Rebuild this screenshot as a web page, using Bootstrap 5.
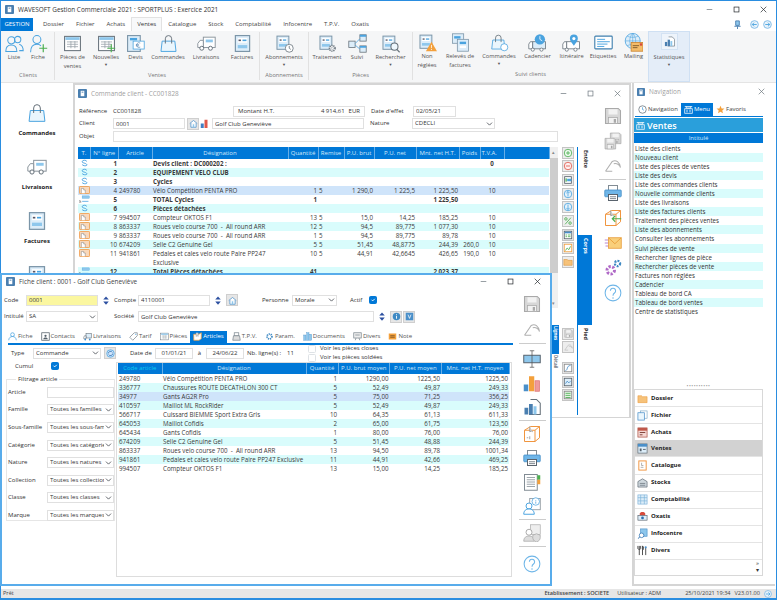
<!DOCTYPE html>
<html lang="fr">
<head>
  <meta charset="UTF-8" />
  <title>WAVESOFT Gestion Commerciale 2021</title>
  <link href="https://cdn.jsdelivr.net/npm/bootstrap@5.3.0/dist/css/bootstrap.min.css" rel="stylesheet"/>
  <style>
    body { margin: 0; width: 777px; height: 600px; overflow: hidden; background: #fff; font-family: "Open Sans", "Noto Sans", sans-serif; font-size: 6px; line-height: 9px; color: #333; }
    .app { width: 777px; height: 600px; border: 1px solid #2a8de0; border-bottom-width: 2px; }
    svg { display: block; flex: none; }
    .i7 { width: 7px; height: 7px; } .i8 { width: 8px; height: 8px; } .i9 { width: 9px; height: 9px; } .i10 { width: 10px; height: 10px; }
    .i11 { width: 11px; height: 11px; } .i18 { width: 18px; height: 18px; } .i19 { width: 19px; height: 19px; } .i20 { width: 20px; height: 20px; }
    .g { width: 11px; height: 8px; } .spin { width: 8px; height: 11px; }
    .w13 { width: 13px; } .w19 { width: 19px; } .w21 { width: 21px; } .w22 { width: 22px; } .w24 { width: 24px; } .w25 { width: 25px; } .w27 { width: 27px; } .w28 { width: 28px; }
    .w29 { width: 29px; } .w30 { width: 30px; } .w31 { width: 31px; } .w32 { width: 32px; } .w34 { width: 34px; } .w35 { width: 35px; } .w36 { width: 36px; } .w37 { width: 37px; } .w38 { width: 38px; }
    .w39 { width: 39px; } .w40 { width: 40px; } .w42 { width: 42px; } .w43 { width: 43px; } .w45 { width: 45px; } .w48 { width: 48px; } .w65 { width: 65px; } .w67 { width: 67px; } .w68 { width: 68px; }
    .w72 { width: 72px; } .w83 { width: 83px; } .w120 { width: 120px; } .w132 { width: 132px; } .w152 { width: 152px; } .w236 { width: 236px; } .w445 { width: 445px; }
    .ml1 { margin-left: 1px; } .ml2 { margin-left: 2px; } .ml3 { margin-left: 3px; } .ml6 { margin-left: 6px; } .ml13 { margin-left: 13px; } .ml14 { margin-left: 14px; } .ml27 { margin-left: 24px; }
    .mr1 { margin-right: 1px; } .mr3 { margin-right: 3px; } .mr20 { margin-right: 20px; } .mt2p { margin-top: 2px; }

    /* title bar + menu */
    .titlebar { height: 17px; font-size: 6.4px; padding-right: 9px; }
    .menubar { height: 13px; }
    .menubar .gestion { width: 32px; height: 13px; padding: 0; border: 0; border-radius: 0; background: #0078d7; color: #fff; font-size: 6px; line-height: 13px; margin-right: 4px; }
    .menubar .nav-link { padding: 0 6px; line-height: 13px; font-size: 6px; color: #444; }
    .menubar .nav-link.active { background: #f8f9fa; border: 1px solid #e2e2e2; border-bottom: 0; color: #333; line-height: 13px; margin-top: -1px; padding: 0 5px; }
    .ribbon { height: 52px; background: #f5f6f7; padding-left: 1px; border-bottom: 1px solid #e4e4e4; }
    .rgroup { border-right: 1px solid #e1e1e1; margin: 1px 0 2px; }
    .rbtn { height: 39px; padding-top: 2px; line-height: 8.5px; text-align: center; font-size: 5.7px; color: #555; }
    .rbtn svg { margin: 0 auto; }
    .rcaption { height: 9px; text-align: center; color: #777; font-size: 5.7px; }
    .caret { font-size: 4px; line-height: 6px; display: block; }
    .stats { background: #e4edf8; border: 1px solid #cfe0f3; margin-top: 0; height: 51px; padding-top: 1px; }
    .stats .box { width: 17px; height: 17px; background: #eef4fb; border: 1px solid #d3e2f3; margin: 0 auto 3px; padding: 2px; }

    /* workspace */
    .workspace { height: 506px; }
    .sidebar { width: 72px; padding-top: 20px; }
    .sidebar .item { height: 54px; font-weight: 700; color: #222; font-size: 6px; text-align: center; }
    .sidebar svg { margin: 0 auto 6px; }
    .win-back { width: 558px; height: 335px; border: 1px solid #d5d5d5; border-width: 2px 2px 1px 2px; }
    .wintitle { height: 16px; color: #a0a0a0; font-size: 6.4px; padding: 1px 8px 0 3px; }
    .fc { height: 11px; min-height: 0; padding: 0 2px; font-size: inherit; line-height: 9px; border-radius: 0; border-color: #e0e0e0; color: #333; }
    .code { background: #fbf7a0; }
    .fs { height: 11px; min-height: 0; padding: 0 9px 0 2px; font-size: inherit; line-height: 9px; border-radius: 0; border-color: #e0e0e0; background-size: 7px 6px; background-position: right 1px center; color: #333; }
    .ck { width: 8px; height: 8px; margin: 0; border-radius: 0; flex: none; }
    .form-check-input.ck:checked { background-color: #0078d7; border-color: #0078d7; }
    .frow { height: 12.5px; }
    .iconbtn { width: 12px; height: 12px; background: #e6e6e6; border: 1px solid #cfcfcf; padding: 0; border-radius: 0; }
    .backleft { width: 502px; padding-left: 3px; }

    /* grids */
    .grid { table-layout: fixed; margin: 0; width: 471px; font-size: 6.2px; --bs-table-bg: transparent; }
    .grid > :not(caption) > * > * { padding: 0 1px; height: 9.1px; line-height: 9px; border: 0; color: #3a3a3a; background: #fff; overflow: hidden; white-space: nowrap; box-shadow: none; }
    .grid > thead > tr > th { height: 11px; background: #0078d7; color: #d5e9fa; font-weight: 400; text-align: center; border-right: 1px solid #67aee8; line-height: 11px; font-size: 6px; }
    .grid > tbody > tr:nth-child(even) > td { background: #d9fcfc; }
    .grid > tbody > tr.sel > td { background: #cfe4fa; }
    .grid td.two { height: 16.5px; white-space: normal; vertical-align: top; }
    .gridback > thead > tr > th { height: 12px; }
    .c12 { width: 12.5px; } .c21 { width: 21px; } .c24 { width: 24px; } .c26 { width: 26px; } .c27 { width: 27.5px; } .c30 { width: 30px; } .c32 { width: 32px; } .c34 { width: 34px; }
    .c42 { width: 42px; } .c43 { width: 43px; } .c44 { width: 44px; } .c45 { width: 45px; } .c51 { width: 51.5px; } .c68 { width: 68px; } .c136 { width: 136px; } .c144 { width: 144px; }
    .gridbox { width: 480px; height: 161px; overflow: hidden; }
    .vscroll { width: 8px; background: #f0f0f0; color: #888; font-size: 5px; text-align: center; }
    .vscroll .up { height: 11px; line-height: 11px; }
    .vscroll .thumb { height: 115px; background: #cdcdcd; }
    .vtab { writing-mode: vertical-rl; font-weight: 700; font-size: 5.5px; line-height: 13px; padding-top: 3px; color: #222; }
    .vtabs { width: 15px; margin: 46px 4px 0 0; border-left: 1px solid #0078d7; height: 268px; }
    .vtab-88 { height: 88px; } .vtab-90 { height: 90px; }
    .vtab-on { background: #0078d7; color: #fff; }
    .minitabs { width: 7px; margin: 17px 0 0 474px; }
    .minitabs .vtab { font-size: 4.5px; line-height: 7px; padding-top: 1px; }
    .vtab-29 { height: 29px; } .vtab-35 { height: 35px; }
    .btncol { width: 20px; gap: 1.7px; }
    .btncol .b { width: 12px; height: 12px; background: #ededed; border: 1px solid #c4c4c4; padding: 0; border-radius: 0; display: flex; flex: none; }
    .btncol .sp1 { margin-top: 58px; } .btncol .sp2 { margin-top: 7px; }
    .toolcol { width: 33px; padding-top: 6px; gap: 7px; }
    .toolcol hr { width: 27px; margin: -3px 0; opacity: 1; border-color: #ccc; }

    /* fiche client */
    .fiche { left: -1px; top: 190px; width: 552px; height: 313px; background: #fff; border: 2px solid #58aceb; z-index: 2; }
    .fiche .wintitle { height: 13px; color: #444; padding: 0 9px 0 4px; }
    .frow-code { margin-top: 6px; padding-left: 2px; }
    .frow-int { margin-top: 4px; padding-left: 2px; }
    .ftabs { height: 14px; margin: 7.5px 1px 0 6px; border-bottom: 2px solid #0078d7; }
    .ftabs .nav-link { display: flex; align-items: center; gap: 1px; padding: 0; height: 12px; color: #555; font-size: 6px; }
    .ftabs .nav-link.active { background: #0078d7; color: #fff; padding: 0 3px; margin: 0 -3px 0 -5px; }
    .fpanel { width: 512px; }
    .fstrip { height: 17px; padding-left: 9px; }
    .cumul { height: 9px; padding-left: 13px; }
    .fset { width: 109px; height: 146px; margin: 4px 0 0 4px; padding: 0 0 0 1px; border: 1px solid #e6e6e6; }
    .fset legend { float: none; width: auto; margin: -5px 0 0 8px; padding: 0 2px; font-size: 6px; line-height: 9px; background: #fff; }
    .fset .frow2 { height: 17.6px; }
    .frame { width: 396px; height: 215px; border: 1px solid #ddd; padding: 0 1px; margin-left: 1px; }
    .grid2 { width: 391px; }
    .toolcol2 { width: 36px; padding-top: 7px; gap: 6px; }
    .toolcol2 hr { width: 27px; margin: -2px 0; opacity: 1; border-color: #ccc; }

    /* navigation */
    .navpanel { width: 143px; margin-left: 1px; border-left: 2px solid #d5d5d5; border-bottom: 2px solid #d5d5d5; height: 503px; }
    .navpanel .wintitle { height: 17px; padding-top: 0; padding-right: 10px; }
    .navtabs { height: 14px; margin: 3px 12px 0 1px; border-bottom: 1px solid #0078d7; }
    .navtabs .nav-link { display: flex; align-items: center; gap: 1px; padding: 0 3px; height: 13px; color: #444; font-size: 6px; }
    .navtabs .nav-link.active { background: #0078d7; color: #fff; }
    .navhead { height: 14px; margin: 1px 12px 1px 0; background: #2a9fdb; color: #fff; font-weight: 600; font-size: 9px; padding-left: 2px; gap: 2px; }
    .navcol { height: 10px; margin: 0 12px 0.5px 0; background: #0078d7; color: #d5e9fa; text-align: center; line-height: 10px; }
    .navmenu { margin-right: 12px; border-radius: 0; }
    .navmenu .list-group-item { padding: 0 1px; border: 0; height: 9.1px; line-height: 9.1px; border-radius: 0; font-size: 6.2px; color: #333; background: #fff; }
    .navmenu .list-group-item:nth-child(even) { background: #d9fcfc; }
    .dots { color: #999; font-size: 5px; line-height: 6px; text-align: center; margin-right: 12px; letter-spacing: 0.5px; }
    .outlook { margin: 0 12px 8px 0; border: 1px solid #d8d8d8; border-radius: 0; }
    .outlook .list-group-item { display: flex; align-items: center; gap: 3px; height: 17.1px; padding: 0 0 0 2px; border: 0; border-bottom: 1px solid #e4e4e4; border-radius: 0; font-weight: 700; font-size: 6px; color: #222; background: #fff; }
    .outlook .list-group-item.active { background: #d2d2d2; }
    .outlook .more { height: 15px; text-align: right; font-size: 6px; padding-right: 3px; line-height: 7px; color: #333; }

    .statusbar { height: 9px; background: #e6e6e6; font-size: 5.6px; padding-left: 2px; color: #444; }
  </style>
</head>
<body>
<svg class="d-none" xmlns="http://www.w3.org/2000/svg">
  <symbol id="appicon" viewBox="0 0 10 10"><rect width="10" height="10" rx="1" fill="#4a7fb0"/><rect x="3" y="2" width="4" height="6" fill="#fff"/><rect x="4" y="3" width="2" height="1" fill="#4a7fb0"/></symbol>
  <symbol id="min" viewBox="0 0 10 10"><path d="M1 5h8" stroke="currentColor"/></symbol>
  <symbol id="max" viewBox="0 0 10 10"><rect x="1.500" y="1.500" width="7" height="7" fill="none" stroke="currentColor"/></symbol>
  <symbol id="close" viewBox="0 0 10 10"><path d="M1 1l8 8M9 1l-8 8" stroke="currentColor"/></symbol>
  <symbol id="pin" viewBox="0 0 10 10"><path d="M3 1h4v5H3zM1.500 7h7M5 7v3" fill="#8ec7ec" stroke="#4a7fb0"/></symbol>
  <symbol id="circleleft" viewBox="0 0 10 10"><circle cx="5" cy="5" r="4.300" fill="#e8f3fb" stroke="#7db9e6"/><path d="M7.500 5h-5M4.500 3l-2 2 2 2" fill="none" stroke="#4aa3df"/></symbol>
  <symbol id="circleright" viewBox="0 0 10 10"><circle cx="5" cy="5" r="4.300" fill="#e8f3fb" stroke="#7db9e6"/><path d="M2.500 5h5M5.500 3l2 2-2 2" fill="none" stroke="#4aa3df"/></symbol>

  <symbol id="users" viewBox="0 0 24 24"><g fill="none" stroke="#4aa3df" stroke-width="1.300"><circle cx="8" cy="8" r="4.500"/><path d="M1 22c0-6 3-8 7-8s7 2 7 8z"/><circle cx="16" cy="7" r="4"/><path d="M18 13c3 1 5 3 5 8h-5"/></g></symbol>
  <symbol id="userplus" viewBox="0 0 24 24"><g fill="none" stroke="#4aa3df" stroke-width="1.300"><circle cx="10" cy="7" r="5"/><path d="M2 23c0-7 3-10 8-10 2 0 4 .5 5 2"/></g><path d="M18 13v10M13 18h10" stroke="#4caf50" stroke-width="1.500"/></symbol>
  <symbol id="win" viewBox="0 0 24 24"><rect x="2" y="3" width="20" height="18" fill="#fff" stroke="#66717a" stroke-width="1.300"/><rect x="3" y="4" width="18" height="3.500" fill="#8ec7ec"/><path d="M5 10h14M5 13h14M5 16h14M10 9v9M15 9v9" stroke="#9aa3aa"/></symbol>
  <symbol id="winplus" viewBox="0 0 24 24"><use href="#win"/><path d="M18 13v10M13 18h10" stroke="#4caf50" stroke-width="1.500"/></symbol>
  <symbol id="form" viewBox="0 0 24 24"><rect x="3" y="2" width="18" height="20" fill="#dcedf9" stroke="#7b95a8" stroke-width="1.500"/><rect x="6" y="5" width="12" height="6" fill="#fff"/><rect x="7" y="7" width="3" height="2" fill="#556"/><rect x="12" y="7" width="5" height="2" fill="#4aa3df"/><rect x="6" y="14" width="12" height="4" fill="#8ec7ec"/></symbol>
  <symbol id="devis" viewBox="0 0 24 24"><rect x="2" y="2" width="16" height="20" fill="#dcedf9" stroke="#7b95a8" stroke-width="1.400"/><rect x="5" y="5" width="9" height="3" fill="#4aa3df"/><rect x="9" y="9" width="14" height="10" fill="#fff" stroke="#4aa3df"/><path d="M18 11.500a3 3 0 1 0 0 5M12.500 13.500h4M12.500 15h4" fill="none" stroke="#4a7fb0" stroke-width=".8"/></symbol>
  <symbol id="bag" viewBox="0 0 24 24"><path d="M4 9h16l1.500 13h-19z" fill="#eaf6fd" stroke="#4aa3df" stroke-width="1.200"/><path d="M8 12V6a4 4 0 0 1 8 0v6" fill="none" stroke="#66717a" stroke-width="1.200"/></symbol>
  <symbol id="truck" viewBox="0 0 24 24"><rect x="8" y="4" width="15" height="13" fill="#fff" stroke="#8a949c" stroke-width="1.200"/><rect x="11" y="7" width="9" height="3.500" fill="#8ec7ec"/><path d="M8 8H4l-3 4v5h7z" fill="#fff" stroke="#8a949c" stroke-width="1.200"/><circle cx="6" cy="18" r="2.500" fill="#fff" stroke="#66717a" stroke-width="1.200"/><circle cx="17" cy="18" r="2.500" fill="#fff" stroke="#66717a" stroke-width="1.200"/></symbol>
  <symbol id="clock" viewBox="0 0 24 24"><circle cx="12" cy="12" r="10" fill="#fff" stroke="#66717a" stroke-width="2"/><path d="M12 6v6l4 3" fill="none" stroke="#66717a" stroke-width="2"/></symbol>
  <symbol id="gear" viewBox="0 0 24 24"><circle cx="12" cy="12" r="7" fill="#fff" stroke="#66717a" stroke-width="4" stroke-dasharray="3 2"/><circle cx="12" cy="12" r="3" fill="#fff" stroke="#66717a"/></symbol>
  <symbol id="abo" viewBox="0 0 24 24"><use href="#form" width="20" height="22"/><use href="#clock" x="12" y="12" width="12" height="12"/></symbol>
  <symbol id="trait" viewBox="0 0 24 24"><use href="#form" width="20" height="22"/><use href="#gear" x="12" y="12" width="12" height="12"/></symbol>
  <symbol id="suivi" viewBox="0 0 24 24"><g fill="#dcedf9" stroke="#66717a"><rect x="1" y="9" width="8" height="8"/><rect x="15" y="1" width="8" height="8"/><rect x="15" y="15" width="8" height="8"/></g><path d="M9 12l6-6M9 14l6 5" stroke="#4aa3df"/><path d="M15 1h8v2.500h-8zM15 15h8v2.500h-8z" fill="#4aa3df"/></symbol>
  <symbol id="search" viewBox="0 0 24 24"><use href="#form" width="20" height="22"/><circle cx="17" cy="16" r="4.500" fill="#eef7fd" stroke="#66717a" stroke-width="1.300"/><path d="M20 19.500l3.500 3.500" stroke="#66717a" stroke-width="1.500"/></symbol>
  <symbol id="warn" viewBox="0 0 24 24"><use href="#form" width="20" height="22"/><path d="M17 11l7 12H10z" fill="#f3a03c"/><path d="M17 15v4M17 20v1.500" stroke="#fff"/></symbol>
  <symbol id="releve" viewBox="0 0 24 24"><rect x="2" y="1" width="14" height="12" fill="#dcedf9" stroke="#7b95a8"/><rect x="4" y="4" width="8" height="3" fill="#4aa3df"/><rect x="8" y="8" width="14" height="15" fill="#dcedf9" stroke="#7b95a8"/><rect x="11" y="11" width="8" height="3" fill="#4aa3df"/><rect x="11" y="16" width="8" height="3" fill="#fff"/></symbol>
  <symbol id="bagsearch" viewBox="0 0 24 24"><use href="#bag" width="21" height="23"/><circle cx="18" cy="18" r="4.500" fill="#fff" stroke="#4aa3df"/></symbol>
  <symbol id="truckclock" viewBox="0 0 24 24"><path d="M6 11H3l-2 3v6h5z" fill="#fff" stroke="#66717a"/><rect x="6" y="11" width="16" height="9" fill="#dcedf9" stroke="#66717a"/><circle cx="6" cy="21" r="2" fill="#fff" stroke="#66717a"/><circle cx="17" cy="21" r="2" fill="#fff" stroke="#66717a"/><circle cx="15" cy="8" r="6.500" fill="#4aa3df"/><path d="M15 4v4l3 2" fill="none" stroke="#fff"/></symbol>
  <symbol id="truckpin" viewBox="0 0 24 24"><path d="M6 11H3l-2 3v6h5z" fill="#fff" stroke="#66717a"/><rect x="6" y="11" width="16" height="9" fill="#fff" stroke="#66717a"/><circle cx="6" cy="21" r="2" fill="#fff" stroke="#66717a"/><circle cx="17" cy="21" r="2" fill="#fff" stroke="#66717a"/><path d="M15 16c-3-4-5-6-5-9a5 5 0 0 1 10 0c0 3-2 5-5 9z" fill="#4aa3df"/><circle cx="15" cy="7" r="2" fill="#fff"/></symbol>
  <symbol id="label" viewBox="0 0 24 24"><rect x="1" y="4" width="22" height="16" rx="1" fill="#fff" stroke="#3f7fae" stroke-width="1.400"/><path d="M4 8h10M4 11h16M4 14h13M4 17h9" stroke="#4aa3df" stroke-width="1.200"/></symbol>
  <symbol id="mailing" viewBox="0 0 24 24"><circle cx="11" cy="10" r="9.500" fill="#dcedf9" stroke="#4aa3df"/><path d="M1.500 10h19M11 .5v19M4 4c4 2 10 2 14 0M4 16c4-2 10-2 14 0M11 .5c-5 5-5 14 0 19M11 .5c5 5 5 14 0 19" fill="none" stroke="#4aa3df" stroke-width=".7"/><rect x="9" y="12" width="15" height="11" fill="#f4bd6a" stroke="#c9822d"/><path d="M11 16h8M11 18.500h6" stroke="#6b4a20"/><rect x="20" y="13" width="3" height="3" fill="#d64a3a"/></symbol>
  <symbol id="statdoc" viewBox="0 0 24 24"><path d="M10 2h8l5 5v15H8" fill="#fff" stroke="#66717a" stroke-width="1.400"/><rect x="2" y="13" width="5" height="9" fill="#4a7fb0"/><rect x="8" y="8" width="5" height="14" fill="#4a7fb0"/><rect x="14" y="11" width="4" height="11" fill="#8ec7ec"/></symbol>
  <symbol id="save" viewBox="0 0 24 24"><path d="M2 2h17l3 3v17H2z" fill="#d7d7d7" stroke="#a9a9a9" stroke-width="1.400"/><rect x="6" y="3" width="12" height="7" fill="#f2f2f2"/><rect x="6" y="14" width="12" height="8" fill="#f2f2f2" stroke="#a9a9a9"/><rect x="13" y="16" width="3" height="5" fill="#a9a9a9"/></symbol>
  <symbol id="savecopy" viewBox="0 0 24 24"><use href="#save" x="7" width="17" height="17"/><use href="#save" y="7" width="17" height="17"/></symbol>
  <symbol id="undo" viewBox="0 0 24 24"><path d="M2 19L11 6c5-3 10 1 11 8-1-4-5-6-9-5M2 19h9" fill="none" stroke="#b0b0b0" stroke-width="1.400"/></symbol>
  <symbol id="printer" viewBox="0 0 24 24"><rect x="6" y="2" width="12" height="7" fill="#fff" stroke="#7f8a92" stroke-width="1.300"/><rect x="1" y="8" width="22" height="9" rx="1" fill="#6fb6e8" stroke="#3f8ac4"/><rect x="6" y="14" width="12" height="8" fill="#fff" stroke="#55606a" stroke-width="1.300"/><path d="M8 17h8M8 19.500h8" stroke="#55606a"/></symbol>
  <symbol id="boxarrow" viewBox="0 0 24 24"><path d="M2 7l8-5h12v15l-6 5H2zM16 7v15M2 7h14l6-5" fill="#fff" stroke="#f0923a" stroke-width="1.300"/><path d="M9 2v7l2-1 2 1" fill="#d9d9d9" stroke="#888"/><path d="M23 13H11M15 9l-4 4 4 4" fill="none" stroke="#4caf50" stroke-width="1.500"/></symbol>
  <symbol id="box" viewBox="0 0 24 24"><path d="M2 7l8-5h12v15l-6 5H2zM16 7v15M2 7h14l6-5" fill="#fff" stroke="#f0923a" stroke-width="1.300"/><path d="M9 2v7l2-1 2 1" fill="#d9d9d9" stroke="#888"/><path d="M5 17h2M9 15v4" stroke="#888"/></symbol>
  <symbol id="envelope" viewBox="0 0 24 24"><path d="M1 8h5M1 12h5M2 16h4" stroke="#a05fc0"/><rect x="6" y="5" width="17" height="14" fill="#f9cf7b" stroke="#e6962f"/><path d="M6 5l8.500 8L23 5" fill="none" stroke="#e6962f"/></symbol>
  <symbol id="gears" viewBox="0 0 24 24"><circle cx="9" cy="15" r="5" fill="#fff" stroke="#b06ac7" stroke-width="4" stroke-dasharray="3 2"/><circle cx="18" cy="6" r="3.500" fill="#fff" stroke="#3f8ac4" stroke-width="3" stroke-dasharray="2.500 1.500"/></symbol>
  <symbol id="help" viewBox="0 0 24 24"><circle cx="12" cy="12" r="10.500" fill="#fff" stroke="#6fb6e8" stroke-width="1.400"/><path d="M8.500 9a3.500 3.500 0 1 1 5.500 3c-1.500 1-2 1.500-2 3.500M12 17.500v2" fill="none" stroke="#6fb6e8" stroke-width="1.400"/></symbol>
  <symbol id="resize" viewBox="0 0 24 24"><rect x="1" y="7" width="22" height="10" fill="#8ec7ec" stroke="#55606a" stroke-width="1.300"/><path d="M9 1h6M12 1v22M9 23h6" stroke="#555" fill="none"/></symbol>
  <symbol id="bars" viewBox="0 0 24 24"><rect x="1" y="14" width="6" height="9" fill="#4a8fc9"/><rect x="8" y="3" width="7" height="20" fill="#f3a03c"/><rect x="16" y="9" width="6" height="14" fill="#ef9a9a" stroke="#d77"/></symbol>
  <symbol id="listdoc" viewBox="0 0 24 24"><rect x="2" y="2" width="17" height="21" fill="#fff" stroke="#7f8a92" stroke-width="1.300"/><path d="M5 6h11M5 9h11M5 12h11M5 15h11M5 18h11" stroke="#7f8a92"/><rect x="19" y="3" width="4" height="6" fill="#4caf50"/><rect x="19" y="9" width="4" height="6" fill="#f3a03c"/></symbol>
  <symbol id="userinfo" viewBox="0 0 24 24"><rect x="9" y="2" width="14" height="15" fill="#fff" stroke="#7f8a92"/><circle cx="17" cy="6" r="5" fill="#fff" stroke="#4aa3df"/><path d="M17 4v1M17 6v3" stroke="#4aa3df"/><circle cx="8" cy="12" r="4" fill="#fff" stroke="#4aa3df" stroke-width="1.300"/><path d="M1 23c0-5 3-7 7-7s7 2 7 7z" fill="#fff" stroke="#4aa3df" stroke-width="1.300"/></symbol>
  <symbol id="usershield" viewBox="0 0 24 24"><rect x="10" y="1" width="13" height="13" fill="#eee" stroke="#b0b0b0"/><circle cx="8" cy="11" r="4" fill="#fff" stroke="#aaa" stroke-width="1.300"/><path d="M1 23c0-5 3-7 7-7s7 2 7 7z" fill="#ddd" stroke="#aaa"/><path d="M18 13l5 2v3c0 3-2 5-5 6-3-1-5-3-5-6v-3z" fill="#ddd" stroke="#aaa"/></symbol>
  <symbol id="gsync" viewBox="0 0 14 10"><path d="M10 3C9 1 5 1 4 3s5 2 6 4-5 2-6 0" fill="none" stroke="#4aa3df" stroke-width="1.200"/></symbol>
  <symbol id="gbox" viewBox="0 0 14 10"><rect x=".5" y=".5" width="13" height="9" rx="1" fill="#f8d8bb" stroke="#f0923a"/><path d="M3 9V3h3v2h2v4" fill="#fff" stroke="#888" stroke-width=".7"/></symbol>
  <symbol id="gtotal" viewBox="0 0 14 10"><rect x="4" y="1" width="9" height="3" fill="#8ec7ec" stroke="#4aa3df" stroke-width=".5"/><path d="M0 9h3M0 7.500c2-1 2 0 2 1" stroke="#555" stroke-width=".7" fill="none"/><path d="M4 8h8" stroke="#4aa3df"/></symbol>
  <symbol id="bplus" viewBox="0 0 12 12"><circle cx="6" cy="6" r="4.500" fill="#f2fbf2" stroke="#4caf50"/><path d="M6 3.500v5M3.500 6h5" stroke="#4caf50"/></symbol>
  <symbol id="bminus" viewBox="0 0 12 12"><circle cx="6" cy="6" r="4.500" fill="#fdf0f0" stroke="#e0584a"/><path d="M3.500 6h5" stroke="#e0584a"/></symbol>
  <symbol id="bcopy" viewBox="0 0 12 12"><rect x="2" y="2" width="8" height="8" fill="#fff" stroke="#55606a"/><rect x="5" y="4.500" width="5" height="3" fill="#4aa3df"/><rect x="3" y="4" width="1.500" height="4" fill="#4caf50"/></symbol>
  <symbol id="bup" viewBox="0 0 12 12"><circle cx="6" cy="6" r="4.500" fill="#e8f3fb" stroke="#4aa3df"/><path d="M6 9V3M4 5l2-2 2 2" fill="none" stroke="#4aa3df"/></symbol>
  <symbol id="bdown" viewBox="0 0 12 12"><circle cx="6" cy="6" r="4.500" fill="#e8f3fb" stroke="#4aa3df"/><path d="M6 3v6M4 7l2 2 2-2" fill="none" stroke="#4aa3df"/></symbol>
  <symbol id="bpct" viewBox="0 0 12 12"><circle cx="3.500" cy="3.500" r="1.500" fill="none" stroke="#4caf50"/><circle cx="8.500" cy="8.500" r="1.500" fill="none" stroke="#4caf50"/><path d="M9.500 2l-7 8" stroke="#4caf50"/></symbol>
  <symbol id="bgrid" viewBox="0 0 12 12"><rect x="1.500" y="1.500" width="9" height="9" fill="#fff" stroke="#55606a"/><rect x="2" y="2" width="8" height="2" fill="#4a8fc9"/><path d="M3 6h2M6 6h3M3 8h2M6 8h3" stroke="#4caf50"/></symbol>
  <symbol id="bchart" viewBox="0 0 12 12"><rect x="1.500" y="1.500" width="9" height="9" fill="#fff" stroke="#f3a03c"/><path d="M3 9l2-3 2 2 2-4" fill="none" stroke="#4caf50"/></symbol>
  <symbol id="bfolder" viewBox="0 0 12 12"><path d="M1 3h4l1 1h5v6H1z" fill="#f6c27a" stroke="#d98b2b" stroke-width=".6"/></symbol>
  <symbol id="bcurve" viewBox="0 0 12 12"><rect x="1.500" y="1.500" width="9" height="9" fill="#fff" stroke="#888"/><path d="M3 9c3 0 1-6 6-6" fill="none" stroke="#4a8fc9"/></symbol>
  <symbol id="bwave" viewBox="0 0 12 12"><rect x="1.500" y="1.500" width="9" height="9" fill="#dcedf9" stroke="#55606a"/><path d="M3 8l2-3 2 2 2-2" fill="none" stroke="#4a8fc9"/></symbol>
  <symbol id="bmap" viewBox="0 0 12 12"><rect x="1.500" y="1.500" width="9" height="9" fill="#e4f4e4" stroke="#888"/><path d="M3 4h6M3 6.500h6M3 9h6" stroke="#4caf50"/></symbol>
  <symbol id="home" viewBox="0 0 12 12"><path d="M1 6l5-4 5 4M2.500 5.500V11h7V5.500" fill="#fff" stroke="#4a8fc9"/><rect x="5" y="7" width="2" height="4" fill="#8ec7ec"/></symbol>
  <symbol id="statmini" viewBox="0 0 12 12"><rect x="1" y="6" width="4" height="6" fill="#3f7fc4"/><rect x="6" y="1" width="4" height="11" fill="#e0584a"/></symbol>
  <symbol id="spinner" viewBox="0 0 8 12"><path d="M1 5l3-3.500L7 5z" fill="#2b4fa0"/><path d="M1 7l3 3.500L7 7z" fill="#2b4fa0"/></symbol>
  <symbol id="refresh" viewBox="0 0 12 12"><circle cx="6" cy="6" r="5" fill="#cfe4fa" stroke="#4aa3df"/><path d="M3 6a3 3 0 0 1 5.500-1.500M9 6a3 3 0 0 1-5.500 1.500" fill="none" stroke="#2b6fb0"/></symbol>
  <symbol id="info" viewBox="0 0 12 12"><circle cx="6" cy="6" r="5" fill="#3f8ac4"/><path d="M6 3v1M6 5v4" stroke="#fff" stroke-width="1.200"/></symbol>
  <symbol id="vbtn" viewBox="0 0 12 12"><rect x="1" y="1" width="10" height="10" fill="#4a8fc9"/><path d="M4 3.500l2 5 2-5" fill="none" stroke="#fff"/></symbol>
  <symbol id="tuser" viewBox="0 0 12 12"><circle cx="6" cy="3.500" r="2.500" fill="none" stroke="#4aa3df"/><path d="M1 11c0-3 2-5 5-5s5 2 5 5" fill="none" stroke="#4aa3df"/></symbol>
  <symbol id="tcontact" viewBox="0 0 12 12"><rect x="1" y="1" width="10" height="10" fill="#fff" stroke="#55606a"/><circle cx="6" cy="5" r="1.500" fill="#55606a"/><path d="M3 9.500c0-3 6-3 6 0" fill="#55606a"/></symbol>
  <symbol id="ttruck" viewBox="0 0 12 12"><rect x="4" y="2" width="7" height="6" fill="#dcedf9" stroke="#55606a" stroke-width=".7"/><path d="M4 5H2L1 7v2h3z" fill="#fff" stroke="#55606a" stroke-width=".7"/><circle cx="3" cy="10" r="1.200" fill="#4a8fc9"/><circle cx="9" cy="10" r="1.200" fill="#4a8fc9"/></symbol>
  <symbol id="ttag" viewBox="0 0 12 12"><path d="M1 7l6-6h4v4l-6 6z" fill="#fff" stroke="#7f8a92"/><circle cx="9" cy="3" r=".8" fill="#4aa3df"/></symbol>
  <symbol id="tbox" viewBox="0 0 12 12"><path d="M1 3h7l3-2v8l-3 2H1z" fill="#fff" stroke="#f3a03c"/><path d="M4 1v5l1.500-1L7 6V1" fill="#d9d9d9" stroke="#888" stroke-width=".5"/></symbol>
  <symbol id="tpv" viewBox="0 0 12 12"><rect x="3" y="1" width="6" height="4" fill="#fff" stroke="#7f8a92"/><path d="M2 5h8l1 6H1z" fill="#dcdcdc" stroke="#7f8a92"/></symbol>
  <symbol id="tgear" viewBox="0 0 12 12"><circle cx="6" cy="6" r="3.200" fill="#fff" stroke="#3f8ac4" stroke-width="2.400" stroke-dasharray="1.500 1"/></symbol>
  <symbol id="tbars" viewBox="0 0 12 12"><rect x="1" y="4" width="3" height="7" fill="#8ec7ec" stroke="#4a8fc9" stroke-width=".5"/><rect x="5" y="1" width="3" height="10" fill="#8ec7ec" stroke="#4a8fc9" stroke-width=".5"/><rect x="9" y="3" width="2.500" height="8" fill="#8ec7ec" stroke="#4a8fc9" stroke-width=".5"/></symbol>
  <symbol id="tdivers" viewBox="0 0 12 12"><rect x="1" y="1" width="10" height="7" fill="#eee" stroke="#7f8a92"/><path d="M4 8l-1 3M8 8l1 3" stroke="#7f8a92"/><path d="M3 4h6" stroke="#7f8a92"/></symbol>
  <symbol id="tnote" viewBox="0 0 12 12"><rect x="1" y="2" width="10" height="8" fill="#f3a03c"/><path d="M3 5h6M3 7h6" stroke="#6b4a20"/></symbol>
  <symbol id="nclock" viewBox="0 0 12 12"><circle cx="6" cy="6" r="5" fill="#fff" stroke="#66717a"/><path d="M6 3v3l2 1" fill="none" stroke="#4aa3df"/></symbol>
  <symbol id="nmenu" viewBox="0 0 12 12"><path d="M1 2h10M3 2v2h6V2" stroke="#fff" fill="none"/><rect x="1" y="5" width="10" height="6" fill="none" stroke="#fff"/><path d="M3 7h2M7 7h2M3 9h2M7 9h2" stroke="#fff"/></symbol>
  <symbol id="nstar" viewBox="0 0 12 12"><path d="M6 1l1.500 3.500 3.800.3-2.900 2.500.9 3.700L6 9l-3.300 2 .9-3.700L.7 4.800l3.800-.3z" fill="#f3a03c"/></symbol>
  <symbol id="ofolder" viewBox="0 0 12 12"><path d="M1 3h4l1 1h5v6.500H1z" fill="#f6c27a" stroke="#ea9a3a" stroke-width=".6"/></symbol>
  <symbol id="ofile" viewBox="0 0 12 12"><rect x="4" y="1" width="7" height="8" fill="#fff" stroke="#7aa6c4" stroke-width=".7"/><rect x="1" y="3" width="7" height="8" fill="#eaf6fd" stroke="#4a8fc9" stroke-width=".8"/></symbol>
  <symbol id="obuy" viewBox="0 0 12 12"><rect x="1" y="1" width="10" height="10" fill="#f4d6d2" stroke="#b0584a" stroke-width=".8"/><rect x="1" y="1" width="10" height="3" fill="#c0584a"/><path d="M3 6h6M3 8.500h3" stroke="#7a3a30"/></symbol>
  <symbol id="osale" viewBox="0 0 12 12"><rect x="1" y="1" width="10" height="10" fill="#dcedf9" stroke="#66717a" stroke-width=".8"/><rect x="1" y="1" width="10" height="3" fill="#4a8fc9"/><rect x="3" y="6" width="2" height="3" fill="#55606a"/><path d="M6.500 7h3" stroke="#55606a"/></symbol>
  <symbol id="ocat" viewBox="0 0 12 12"><rect x="2" y="1" width="8" height="10" fill="#fff" stroke="#f0923a"/><path d="M5 3v3h2M4 8h3" stroke="#888" stroke-width=".7" fill="none"/></symbol>
  <symbol id="ostock" viewBox="0 0 12 12"><path d="M1 5l5-3 5 3v6H1z" fill="#cfd8de" stroke="#55606a" stroke-width=".7"/><path d="M3 7h6M3 9h6" stroke="#55606a" stroke-width=".7"/></symbol>
  <symbol id="ocompta" viewBox="0 0 12 12"><rect x="1" y="1" width="10" height="10" fill="#dcedf9" stroke="#7ab0d8" stroke-width=".7"/><path d="M4 1v10M8 1v10M1 4h10M1 7.500h10" stroke="#7ab0d8" stroke-width=".7"/></symbol>
  <symbol id="ooxatis" viewBox="0 0 12 12"><path d="M3 3c0-2.500 6-2.500 6 0v2H3z" fill="#d64a3a"/><rect x="1" y="5" width="10" height="5" fill="#dcedf9" stroke="#55606a" stroke-width=".7"/><circle cx="6" cy="7.500" r="1.500" fill="#2b6fb0"/></symbol>
  <symbol id="oinfo" viewBox="0 0 12 12"><rect x="4" y="1" width="7" height="8" fill="#8ec7ec" stroke="#4a8fc9" stroke-width=".7"/><circle cx="5" cy="8" r="2.500" fill="#fff" stroke="#2b6fb0" stroke-width=".8"/><path d="M3 10l-2 1.500" stroke="#2b6fb0"/></symbol>
  <symbol id="odivers" viewBox="0 0 12 12"><path d="M2.500 1v10M1 1v3c0 1 3 1 3 0V1M6 1v10M6 1c1.500 1 1.500 4 0 5M9.500 3v8" fill="none" stroke="#444"/><circle cx="9.500" cy="2.500" r="1.200" fill="#4a8fc9"/></symbol>
</svg>

<div class="app">
  <!-- title -->
  <div class="titlebar d-flex align-items-center">
    <svg class="i9 ms-1 me-1"><use href="#appicon"/></svg>
    <span class="flex-grow-1">WAVESOFT Gestion Commerciale 2021 : SPORTPLUS : Exercice 2021</span>
    <svg class="i7 text-secondary mr20"><use href="#min"/></svg>
    <svg class="i7 text-dark mr20"><use href="#max"/></svg>
    <svg class="i7 text-dark"><use href="#close"/></svg>
  </div>
  <div class="menubar d-flex">
    <button class="btn gestion">GESTION</button>
    <ul class="nav flex-grow-1">
      <li class="nav-item"><a class="nav-link">Dossier</a></li>
      <li class="nav-item"><a class="nav-link">Fichier</a></li>
      <li class="nav-item"><a class="nav-link">Achats</a></li>
      <li class="nav-item"><a class="nav-link active">Ventes</a></li>
      <li class="nav-item"><a class="nav-link">Catalogue</a></li>
      <li class="nav-item"><a class="nav-link">Stock</a></li>
      <li class="nav-item"><a class="nav-link">Comptabilité</a></li>
      <li class="nav-item"><a class="nav-link">Infocentre</a></li>
      <li class="nav-item"><a class="nav-link">T.P.V.</a></li>
      <li class="nav-item"><a class="nav-link">Oxatis</a></li>
    </ul>
    <div class="d-flex align-items-center gap-1 me-1">
      <svg class="i9"><use href="#pin"/></svg><svg class="i9 ms-1"><use href="#circleleft"/></svg><svg class="i9"><use href="#circleright"/></svg>
    </div>
  </div>

  <!-- ribbon -->
  <div class="ribbon d-flex">
    <div class="rgroup">
      <div class="d-flex">
        <div class="rbtn w24"><svg class="i19"><use href="#users"/></svg>Liste</div>
        <div class="rbtn w24 me-1"><svg class="i19"><use href="#userplus"/></svg>Fiche</div>
      </div>
      <div class="rcaption">Clients</div>
    </div>
    <div class="rgroup">
      <div class="d-flex">
        <div class="rbtn w35"><svg class="i19"><use href="#win"/></svg>Pièces de<br>ventes</div>
        <div class="rbtn w32"><svg class="i19"><use href="#winplus"/></svg>Nouvelles<span class="caret">▼</span></div>
        <div class="rbtn w27"><svg class="i19"><use href="#devis"/></svg>Devis</div>
        <div class="rbtn w38"><svg class="i19"><use href="#bag"/></svg>Commandes</div>
        <div class="rbtn w38"><svg class="i19"><use href="#truck"/></svg>Livraisons</div>
        <div class="rbtn w34"><svg class="i19"><use href="#form"/></svg>Factures</div>
      </div>
      <div class="rcaption">Ventes</div>
    </div>
    <div class="rgroup">
      <div class="rbtn w48"><svg class="i19"><use href="#abo"/></svg>Abonnements<span class="caret">▼</span></div>
      <div class="rcaption">Abonnements</div>
    </div>
    <div class="rgroup">
      <div class="d-flex">
        <div class="rbtn w36"><svg class="i19"><use href="#trait"/></svg>Traitement</div>
        <div class="rbtn w24"><svg class="i19"><use href="#suivi"/></svg>Suivi</div>
        <div class="rbtn w43"><svg class="i19"><use href="#search"/></svg>Rechercher<span class="caret">▼</span></div>
      </div>
      <div class="rcaption">Pièces</div>
    </div>
    <div>
      <div class="d-flex">
        <div class="rbtn w28"><svg class="i19"><use href="#warn"/></svg>Non<br>réglées</div>
        <div class="rbtn w38"><svg class="i19"><use href="#releve"/></svg>Relevés de<br>factures</div>
        <div class="rbtn w40"><svg class="i19"><use href="#bagsearch"/></svg>Commandes<span class="caret">▼</span></div>
        <div class="rbtn w37"><svg class="i19"><use href="#truckclock"/></svg>Cadencier</div>
        <div class="rbtn w31"><svg class="i19"><use href="#truckpin"/></svg>Itinéraire</div>
        <div class="rbtn w32"><svg class="i19"><use href="#label"/></svg>Etiquettes</div>
        <div class="rbtn w29"><svg class="i19"><use href="#mailing"/></svg>Mailing</div>
      </div>
      <div class="rcaption">Suivi clients</div>
    </div>
    <div class="stats rbtn w42"><div class="box"><svg class="i11"><use href="#statdoc"/></svg></div>Statistiques<span class="caret">▼</span></div>
  </div>

  <div class="workspace d-flex position-relative">
    <!-- left shortcuts -->
    <div class="sidebar">
      <div class="item"><svg class="i20"><use href="#bag"/></svg>Commandes</div>
      <div class="item"><svg class="i20"><use href="#truck"/></svg>Livraisons</div>
      <div class="item"><svg class="i20"><use href="#form"/></svg>Factures</div>
      <div class="item"><svg class="i20"><use href="#form"/></svg></div>
    </div>

    <!-- commande client -->
    <div class="win-back">
      <div class="wintitle d-flex align-items-center">
        <svg class="i9 me-1"><use href="#appicon"/></svg>
        <span class="flex-grow-1">Commande client - CC001828</span>
        <svg class="i7 text-secondary mr20"><use href="#min"/></svg>
        <svg class="i7 text-secondary mr20"><use href="#max"/></svg>
        <svg class="i7 text-secondary"><use href="#close"/></svg>
      </div>
      <div class="d-flex">
        <div class="backleft">
          <div class="frow d-flex align-items-center mt-1">
            <span class="w34 ml1">Référence</span>
            <span class="w120">CC001828</span>
            <div class="form-control fc d-flex w132 px-1"><span class="w45">Montant H.T.</span><span class="w65 text-end">4 914,61</span><span class="ms-1">EUR</span></div>
            <span class="w42 ml6">Date d'effet</span>
            <input class="form-control fc w43" value="02/05/21">
          </div>
          <div class="frow d-flex align-items-center">
            <span class="w34 ml1">Client</span>
            <input class="form-control fc w72" value="0001">
            <button class="btn iconbtn d-flex ml2"><svg class="i9 m-auto"><use href="#home"/></svg></button>
            <svg class="i9 ml1 mr3"><use href="#statmini"/></svg>
            <input class="form-control fc w152" value="Golf Club Geneviève">
            <span class="w42 ml6">Nature</span>
            <select class="form-select fs w83"><option>CDECLI</option></select>
          </div>
          <div class="frow d-flex align-items-center">
            <span class="w34 ml1">Objet</span>
            <input class="form-control fc w445">
          </div>
          <div class="d-flex mt-1">
            <div class="d-flex flex-column">
              <div class="gridbox d-flex">
                <table class="table grid gridback align-self-start">
                  <thead><tr><th class="c12">T.</th><th class="c27">N° ligne</th><th class="c34">Article</th><th class="c136">Désignation</th><th class="c30">Quantité</th><th class="c26">Remise</th><th class="c30">P.U. brut</th><th class="c42">P.U. net</th><th class="c43">Mnt. net H.T.</th><th class="c21">Poids</th><th class="c24 text-start">T.V.A.</th><th class="c45"></th></tr></thead>
                  <tbody>
                    <tr class="fw-bold"><td><svg class="g"><use href="#gsync"/></svg></td><td class="text-end">1</td><td></td><td>Devis client : DC000202 :</td><td></td><td></td><td></td><td></td><td></td><td></td><td class="text-center">0</td><td></td></tr>
                    <tr class="fw-bold"><td><svg class="g"><use href="#gsync"/></svg></td><td class="text-end">2</td><td></td><td>EQUIPEMENT VELO CLUB</td><td></td><td></td><td></td><td></td><td></td><td></td><td></td><td></td></tr>
                    <tr class="fw-bold"><td><svg class="g"><use href="#gsync"/></svg></td><td class="text-end">3</td><td></td><td>Cycles</td><td></td><td></td><td></td><td></td><td></td><td></td><td></td><td></td></tr>
                    <tr class="sel"><td><svg class="g"><use href="#gbox"/></svg></td><td class="text-end">4</td><td>249780</td><td>Vélo Compétition PENTA PRO</td><td class="text-end">1</td><td>5</td><td class="text-end">1 290,0</td><td class="text-end">1 225,5</td><td class="text-end">1 225,50</td><td></td><td class="text-center">10</td><td></td></tr>
                    <tr class="fw-bold"><td><svg class="g"><use href="#gtotal"/></svg></td><td class="text-end">5</td><td></td><td>TOTAL Cycles</td><td class="text-end">1</td><td></td><td></td><td></td><td class="text-end">1 225,50</td><td></td><td></td><td></td></tr>
                    <tr class="fw-bold"><td><svg class="g"><use href="#gsync"/></svg></td><td class="text-end">6</td><td></td><td>Pièces détachées</td><td></td><td></td><td></td><td></td><td></td><td></td><td></td><td></td></tr>
                    <tr><td><svg class="g"><use href="#gbox"/></svg></td><td class="text-end">7</td><td>994507</td><td>Compteur OKTOS F1</td><td class="text-end">13</td><td>5</td><td class="text-end">15,0</td><td class="text-end">14,25</td><td class="text-end">185,25</td><td></td><td class="text-center">10</td><td></td></tr>
                    <tr><td><svg class="g"><use href="#gbox"/></svg></td><td class="text-end">8</td><td>863337</td><td>Roues velo course 700 &nbsp;- &nbsp;All round ARR</td><td class="text-end">12</td><td>5</td><td class="text-end">94,5</td><td class="text-end">89,775</td><td class="text-end">1 077,30</td><td></td><td class="text-center">10</td><td></td></tr>
                    <tr><td><svg class="g"><use href="#gbox"/></svg></td><td class="text-end">9</td><td>863337</td><td>Roues velo course 700 &nbsp;- &nbsp;All round ARR</td><td class="text-end">1</td><td>5</td><td class="text-end">94,5</td><td class="text-end">89,775</td><td class="text-end">89,78</td><td></td><td class="text-center">10</td><td></td></tr>
                    <tr><td><svg class="g"><use href="#gbox"/></svg></td><td class="text-end">10</td><td>674209</td><td>Selle C2 Genuine Gel</td><td class="text-end">5</td><td>5</td><td class="text-end">51,45</td><td class="text-end">48,8775</td><td class="text-end">244,39</td><td class="text-end">260,0</td><td class="text-center">10</td><td></td></tr>
                    <tr><td class="two"><svg class="g"><use href="#gbox"/></svg></td><td class="two text-end">11</td><td class="two">941861</td><td class="two">Pedales et cales velo route Paire PP247<br>Exclusive</td><td class="two text-end">10</td><td class="two">5</td><td class="two text-end">44,91</td><td class="two text-end">42,6645</td><td class="two text-end">426,65</td><td class="two text-end">190,0</td><td class="two text-center">10</td><td class="two"></td></tr>
                    <tr class="fw-bold"><td><svg class="g"><use href="#gtotal"/></svg></td><td class="text-end">12</td><td></td><td>Total Pièces détachées</td><td class="text-end">41</td><td></td><td></td><td></td><td class="text-end">2 023,37</td><td></td><td></td><td></td></tr>
                  </tbody>
                </table>
                <div class="vscroll d-flex flex-column">
                  <div class="up">▴</div>
                  <div class="thumb"></div>
                  <div class="mt-auto">▾</div>
                </div>
              </div>
              <div class="minitabs">
                <div class="vtab vtab-on vtab-29">Lignes</div>
                <div class="vtab vtab-35 text-secondary">Détail</div>
              </div>
            </div>
            <div class="btncol d-flex flex-column align-items-center">
              <button class="btn b"><svg class="i10 m-auto"><use href="#bplus"/></svg></button>
              <button class="btn b"><svg class="i10 m-auto"><use href="#bminus"/></svg></button>
              <button class="btn b"><svg class="i10 m-auto"><use href="#bcopy"/></svg></button>
              <button class="btn b"><svg class="i10 m-auto"><use href="#bup"/></svg></button>
              <button class="btn b"><svg class="i10 m-auto"><use href="#bdown"/></svg></button>
              <button class="btn b"><svg class="i10 m-auto"><use href="#bpct"/></svg></button>
              <button class="btn b"><svg class="i10 m-auto"><use href="#bgrid"/></svg></button>
              <button class="btn b"><svg class="i10 m-auto"><use href="#bchart"/></svg></button>
              <button class="btn b"><svg class="i10 m-auto"><use href="#bfolder"/></svg></button>
              <button class="btn b sp1"><svg class="i9 m-auto"><use href="#save"/></svg></button>
              <button class="btn b"><svg class="i9 m-auto"><use href="#undo"/></svg></button>
              <button class="btn b sp2"><svg class="i10 m-auto"><use href="#bcurve"/></svg></button>
              <button class="btn b"><svg class="i10 m-auto"><use href="#bwave"/></svg></button>
              <button class="btn b"><svg class="i10 m-auto"><use href="#bmap"/></svg></button>
            </div>
          </div>
        </div>
        <div class="vtabs d-flex flex-column">
          <div class="vtab vtab-88">Entête</div>
          <div class="vtab vtab-on vtab-90">Corps</div>
          <div class="vtab vtab-90">Pied</div>
        </div>
        <div class="toolcol d-flex flex-column align-items-center">
          <svg class="i18"><use href="#save"/></svg>
          <svg class="i18"><use href="#savecopy"/></svg>
          <svg class="i18"><use href="#undo"/></svg>
          <hr>
          <svg class="i18"><use href="#printer"/></svg>
          <svg class="i18"><use href="#boxarrow"/></svg>
          <svg class="i18"><use href="#envelope"/></svg>
          <svg class="i18"><use href="#gears"/></svg>
          <svg class="i18"><use href="#help"/></svg>
        </div>
      </div>
    </div>

    <!-- navigation -->
    <div class="navpanel d-flex flex-column">
      <div class="wintitle d-flex align-items-center">
        <svg class="i8 me-1"><use href="#appicon"/></svg><span class="flex-grow-1">Navigation</span>
        <svg class="i7 text-secondary"><use href="#close"/></svg>
      </div>
      <ul class="nav navtabs">
        <li class="nav-item"><a class="nav-link"><svg class="i9"><use href="#nclock"/></svg>Navigation</a></li>
        <li class="nav-item"><a class="nav-link active"><svg class="i9"><use href="#nmenu"/></svg>Menu</a></li>
        <li class="nav-item"><a class="nav-link"><svg class="i9"><use href="#nstar"/></svg>Favoris</a></li>
      </ul>
      <div class="navhead d-flex align-items-center"><svg class="i9"><use href="#nmenu"/></svg>Ventes</div>
      <div class="navcol">Intitulé</div>
      <div class="list-group navmenu">
        <a class="list-group-item">Liste des clients</a>
        <a class="list-group-item">Nouveau client</a>
        <a class="list-group-item">Liste des pièces de ventes</a>
        <a class="list-group-item">Liste des devis</a>
        <a class="list-group-item">Liste des commandes clients</a>
        <a class="list-group-item">Nouvelle commande clients</a>
        <a class="list-group-item">Liste des livraisons</a>
        <a class="list-group-item">Liste des factures clients</a>
        <a class="list-group-item">Traitement des pièces ventes</a>
        <a class="list-group-item">Liste des abonnements</a>
        <a class="list-group-item">Consulter les abonnements</a>
        <a class="list-group-item">Suivi pièces de vente</a>
        <a class="list-group-item">Rechercher lignes de pièce</a>
        <a class="list-group-item">Rechercher pièces de vente</a>
        <a class="list-group-item">Factures non réglées</a>
        <a class="list-group-item">Cadencier</a>
        <a class="list-group-item">Tableau de bord CA</a>
        <a class="list-group-item">Tableau de bord ventes</a>
        <a class="list-group-item">Centre de statistiques</a>
      </div>
      <div class="flex-grow-1"></div>
      <div class="dots">••••••••••</div>
      <div class="list-group outlook">
        <a class="list-group-item"><svg class="i11"><use href="#ofolder"/></svg>Dossier</a>
        <a class="list-group-item"><svg class="i11"><use href="#ofile"/></svg>Fichier</a>
        <a class="list-group-item"><svg class="i11"><use href="#obuy"/></svg>Achats</a>
        <a class="list-group-item active"><svg class="i11"><use href="#osale"/></svg>Ventes</a>
        <a class="list-group-item"><svg class="i11"><use href="#ocat"/></svg>Catalogue</a>
        <a class="list-group-item"><svg class="i11"><use href="#ostock"/></svg>Stocks</a>
        <a class="list-group-item"><svg class="i11"><use href="#ocompta"/></svg>Comptabilité</a>
        <a class="list-group-item"><svg class="i11"><use href="#ooxatis"/></svg>Oxatis</a>
        <a class="list-group-item"><svg class="i11"><use href="#oinfo"/></svg>Infocentre</a>
        <a class="list-group-item"><svg class="i11"><use href="#odivers"/></svg>Divers</a>
        <div class="more">»<br>▾</div>
      </div>
    </div>

    <!-- fiche client, over the other window -->
    <div class="fiche position-absolute d-flex flex-column">
      <div class="wintitle d-flex align-items-center">
        <svg class="i9 me-1"><use href="#appicon"/></svg>
        <span class="flex-grow-1">Fiche client : 0001 - Golf Club Geneviève</span>
        <svg class="i7 text-secondary mr20"><use href="#min"/></svg>
        <svg class="i7 text-dark mr20"><use href="#max"/></svg>
        <svg class="i7 text-dark"><use href="#close"/></svg>
      </div>
      <div class="d-flex flex-grow-1">
        <div class="fpanel">
          <div class="d-flex align-items-center frow frow-code">
            <span class="w22">Code</span>
            <input class="form-control fc w72 code" value="0001">
            <svg class="spin mx-1"><use href="#spinner"/></svg>
            <span class="w24">Compte</span>
            <input class="form-control fc w72" value="4110001">
            <svg class="spin mx-1"><use href="#spinner"/></svg>
            <button class="btn iconbtn d-flex"><svg class="i9 m-auto"><use href="#home"/></svg></button>
            <span class="w30 ml27">Personne</span>
            <select class="form-select fs w45"><option>Morale</option></select>
            <span class="w19 ml13">Actif</span>
            <input class="form-check-input ck" type="checkbox" checked>
          </div>
          <div class="d-flex align-items-center frow frow-int">
            <span class="w22">Intitulé</span>
            <select class="form-select fs w72"><option>SA</option></select>
            <span class="w24 ms-3">Société</span>
            <input class="form-control fc w236" value="Golf Club Geneviève">
            <svg class="spin mx-1"><use href="#spinner"/></svg>
            <button class="btn iconbtn d-flex mr1"><svg class="i9 m-auto"><use href="#info"/></svg></button>
            <button class="btn iconbtn d-flex"><svg class="i9 m-auto"><use href="#vbtn"/></svg></button>
          </div>
          <ul class="nav ftabs gap-2">
            <li class="nav-item"><a class="nav-link"><svg class="i9"><use href="#tuser"/></svg>Fiche</a></li>
            <li class="nav-item"><a class="nav-link"><svg class="i9"><use href="#tcontact"/></svg>Contacts</a></li>
            <li class="nav-item"><a class="nav-link"><svg class="i9"><use href="#ttruck"/></svg>Livraisons</a></li>
            <li class="nav-item"><a class="nav-link"><svg class="i9"><use href="#ttag"/></svg>Tarif</a></li>
            <li class="nav-item"><a class="nav-link"><svg class="i9"><use href="#win"/></svg>Pièces</a></li>
            <li class="nav-item"><a class="nav-link active"><svg class="i9"><use href="#tbox"/></svg>Articles</a></li>
            <li class="nav-item"><a class="nav-link"><svg class="i9"><use href="#tpv"/></svg>T.P.V.</a></li>
            <li class="nav-item"><a class="nav-link"><svg class="i9"><use href="#tgear"/></svg>Param.</a></li>
            <li class="nav-item"><a class="nav-link"><svg class="i9"><use href="#tbars"/></svg>Documents</a></li>
            <li class="nav-item"><a class="nav-link"><svg class="i9"><use href="#tdivers"/></svg>Divers</a></li>
            <li class="nav-item"><a class="nav-link"><svg class="i9"><use href="#tnote"/></svg>Note</a></li>
          </ul>
          <div class="fstrip d-flex align-items-center">
            <span class="w22">Type</span>
            <select class="form-select fs w68"><option>Commande</option></select>
            <button class="btn iconbtn d-flex ml3"><svg class="i9 m-auto"><use href="#refresh"/></svg></button>
            <span class="w25 ml14">Date de</span>
            <input class="form-control fc w38 text-center" value="01/01/21">
            <span class="w13 text-center">à</span>
            <input class="form-control fc w38 text-center" value="24/06/22">
            <span class="w40 ml3">Nb. ligne(s) :</span>
            <span class="w21">11</span>
            <div class="d-flex flex-column">
              <div class="d-flex align-items-center gap-1"><input class="form-check-input ck" type="checkbox">Voir les pièces closes</div>
              <div class="d-flex align-items-center gap-1"><input class="form-check-input ck" type="checkbox">Voir les pièces soldées</div>
            </div>
          </div>
          <div class="d-flex">
            <div class="flex-shrink-0">
              <div class="cumul d-flex align-items-center"><span class="w36">Cumul</span><input class="form-check-input ck" type="checkbox" checked></div>
              <fieldset class="fset">
                <legend>Filtrage article</legend>
                <div class="frow2 d-flex align-items-center"><span class="w39">Article</span><input class="form-control fc w67"></div>
                <div class="frow2 d-flex align-items-center"><span class="w39">Famille</span><select class="form-select fs w67"><option>Toutes les familles</option></select></div>
                <div class="frow2 d-flex align-items-center"><span class="w39">Sous-famille</span><select class="form-select fs w67"><option>Toutes les sous-familles</option></select></div>
                <div class="frow2 d-flex align-items-center"><span class="w39">Catégorie</span><select class="form-select fs w67"><option>Toutes les catégories</option></select></div>
                <div class="frow2 d-flex align-items-center"><span class="w39">Nature</span><select class="form-select fs w67"><option>Toutes les natures</option></select></div>
                <div class="frow2 d-flex align-items-center"><span class="w39">Collection</span><select class="form-select fs w67"><option>Toutes les collections</option></select></div>
                <div class="frow2 d-flex align-items-center"><span class="w39">Classe</span><select class="form-select fs w67"><option>Toutes les classes</option></select></div>
                <div class="frow2 d-flex align-items-center"><span class="w39">Marque</span><select class="form-select fs w67"><option>Toutes les marques</option></select></div>
              </fieldset>
            </div>
            <div class="frame">
              <table class="table grid grid2">
                <thead><tr><th class="c44 text-info">Code article</th><th class="c144">Désignation</th><th class="c32">Quantité</th><th class="c51">P.U. brut moyen</th><th class="c51">P.U. net moyen</th><th class="c68">Mnt. net H.T. moyen</th></tr></thead>
                <tbody>
                  <tr><td>249780</td><td>Vélo Compétition PENTA PRO</td><td class="text-end">1</td><td class="text-end">1290,00</td><td class="text-end">1225,50</td><td class="text-end">1225,50</td></tr>
                  <tr><td>336777</td><td>Chaussures ROUTE DECATHLON 300 CT</td><td class="text-end">5</td><td class="text-end">52,49</td><td class="text-end">49,87</td><td class="text-end">249,33</td></tr>
                  <tr class="sel"><td>34977</td><td>Gants AG2R Pro</td><td class="text-end">5</td><td class="text-end">75,00</td><td class="text-end">71,25</td><td class="text-end">356,25</td></tr>
                  <tr><td>410597</td><td>Maillot ML RockRider</td><td class="text-end">5</td><td class="text-end">52,49</td><td class="text-end">49,87</td><td class="text-end">249,33</td></tr>
                  <tr><td>566717</td><td>Cuissard BIEMME Sport Extra Gris</td><td class="text-end">10</td><td class="text-end">64,35</td><td class="text-end">61,13</td><td class="text-end">611,33</td></tr>
                  <tr><td>645053</td><td>Maillot Cofidis</td><td class="text-end">2</td><td class="text-end">65,00</td><td class="text-end">61,75</td><td class="text-end">123,50</td></tr>
                  <tr><td>645434</td><td>Gants Cofidis</td><td class="text-end">1</td><td class="text-end">80,00</td><td class="text-end">76,00</td><td class="text-end">76,00</td></tr>
                  <tr><td>674209</td><td>Selle C2 Genuine Gel</td><td class="text-end">5</td><td class="text-end">51,45</td><td class="text-end">48,88</td><td class="text-end">244,39</td></tr>
                  <tr><td>863337</td><td>Roues velo course 700 &nbsp;- &nbsp;All round ARR</td><td class="text-end">13</td><td class="text-end">94,50</td><td class="text-end">89,78</td><td class="text-end">1001,34</td></tr>
                  <tr><td>941861</td><td>Pedales et cales velo route Paire PP247 Exclusive</td><td class="text-end">11</td><td class="text-end">44,91</td><td class="text-end">42,66</td><td class="text-end">469,25</td></tr>
                  <tr><td>994507</td><td>Compteur OKTOS F1</td><td class="text-end">13</td><td class="text-end">15,00</td><td class="text-end">14,25</td><td class="text-end">185,25</td></tr>
                </tbody>
              </table>
            </div>
          </div>
        </div>
        <div class="toolcol2 d-flex flex-column align-items-center">
          <svg class="i18"><use href="#save"/></svg>
          <svg class="i18 mt2p"><use href="#undo"/></svg>
          <hr>
          <svg class="i18 mt2p"><use href="#resize"/></svg>
          <svg class="i18"><use href="#bars"/></svg>
          <svg class="i18"><use href="#statdoc"/></svg>
          <hr>
          <svg class="i18"><use href="#box"/></svg>
          <svg class="i18"><use href="#printer"/></svg>
          <svg class="i18"><use href="#listdoc"/></svg>
          <svg class="i18"><use href="#userinfo"/></svg>
          <hr>
          <svg class="i18"><use href="#usershield"/></svg>
          <hr>
          <svg class="i18 mt-1"><use href="#help"/></svg>
        </div>
      </div>
    </div>
  </div>

  <!-- status -->
  <div class="statusbar d-flex align-items-center">
    <span class="flex-grow-1">Prêt</span>
    <span class="fw-semibold me-2">Etablissement : SOCIETE</span>
    <span class="me-4">Utilisateur : ADM</span>
    <span class="me-1">25/10/2021 19:34</span>
    <span class="me-1">V23.01.00</span>
    <svg class="i8 me-1"><use href="#circleright"/></svg>
  </div>
</div>
</body>
</html>
